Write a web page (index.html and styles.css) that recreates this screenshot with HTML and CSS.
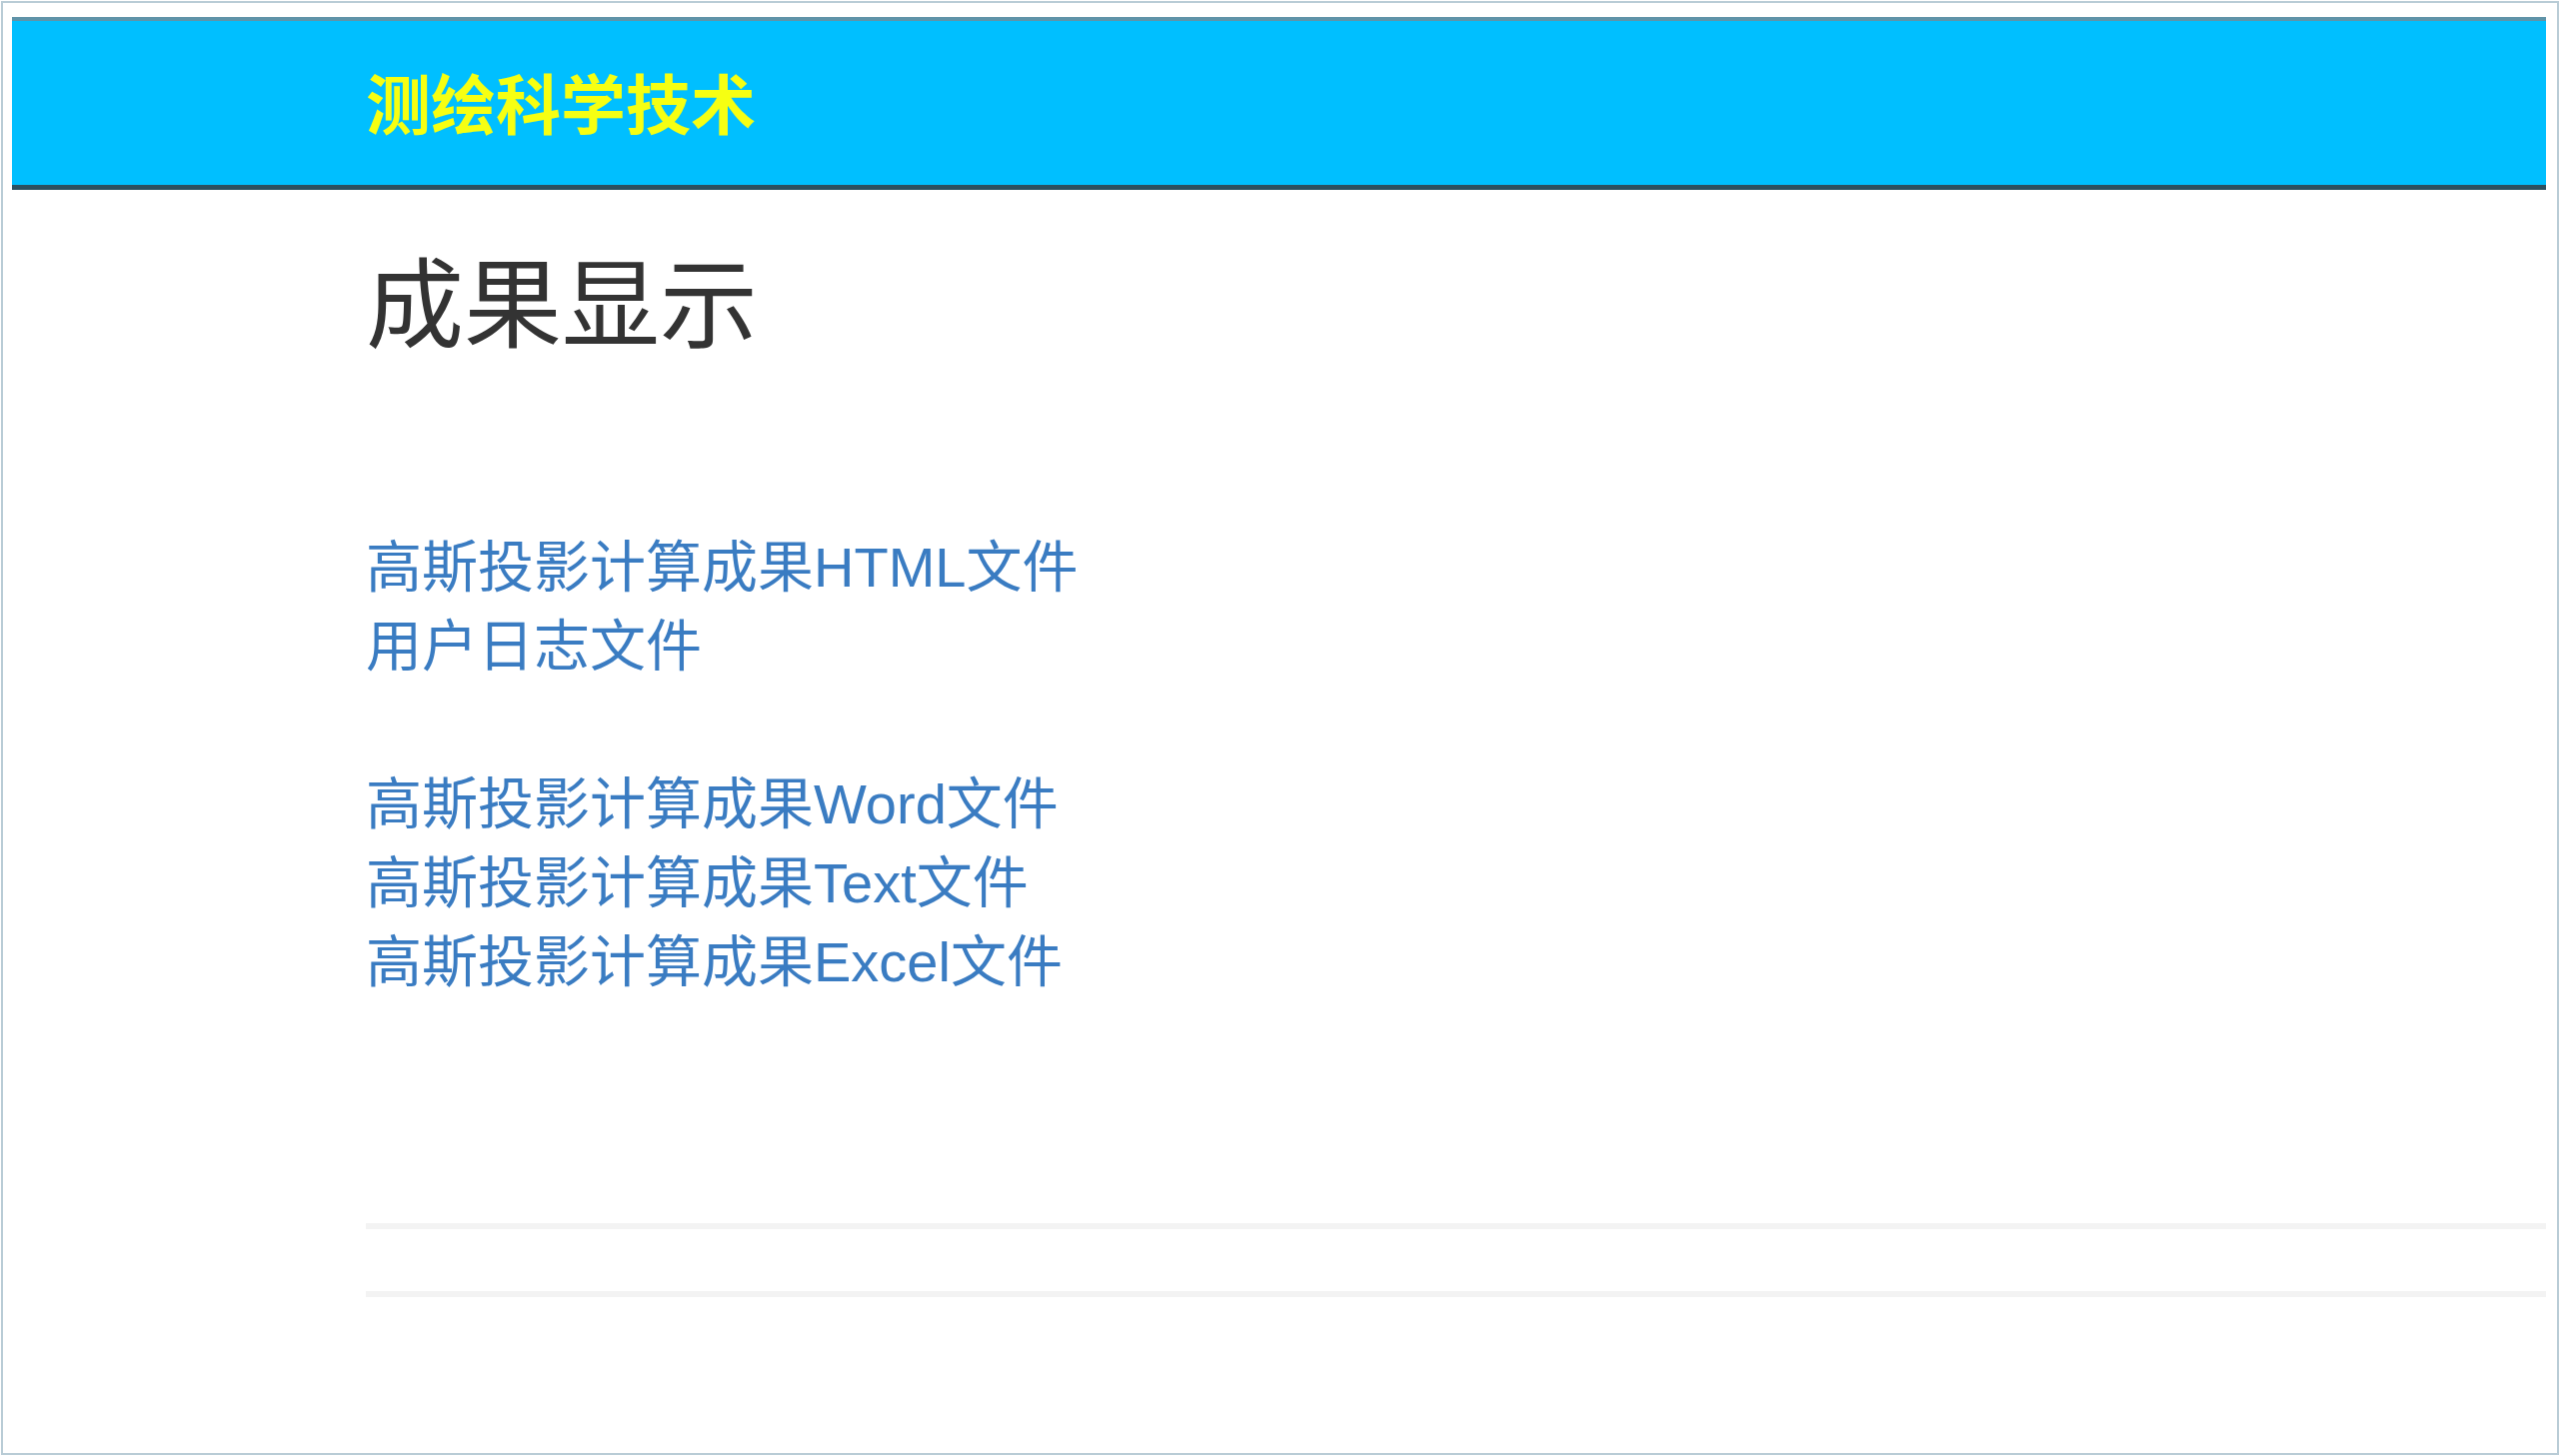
FILE: index.html
```html
<!DOCTYPE html>
<html lang="zh-CN">
<head>
<meta charset="utf-8">
<title>成果显示</title>
<link rel="stylesheet" href="styles.css">
</head>
<body>
<div class="frame">
  <header class="topbar">
    <div class="brand">测绘科学技术</div>
  </header>
  <main class="content">
    <h2 class="page-title">成果显示</h2>
    <div class="links">
      <div class="group">
        <a href="#">高斯投影计算成果HTML文件</a>
        <a href="#">用户日志文件</a>
      </div>
      <div class="group">
        <a href="#">高斯投影计算成果Word文件</a>
        <a href="#">高斯投影计算成果Text文件</a>
        <a href="#">高斯投影计算成果Excel文件</a>
      </div>
    </div>
    <div class="rule rule-first"></div>
    <div class="rule rule-second"></div>
  </main>
</div>
</body>
</html>
```

FILE: styles.css
```css
html, body {
  margin: 0;
  padding: 0;
  background: #ffffff;
}

body {
  font-family: "Liberation Sans", "Noto Sans CJK SC", sans-serif;
}

.frame {
  margin: 1px;
  border: 2px solid #b9ccd6;
  height: calc(100vh - 2px);
  box-sizing: border-box;
  padding: 14px 11px 0 9px;
  overflow: hidden;
}

.topbar {
  height: 173px;
  box-sizing: border-box;
  background: #00bfff;
  border-top: 4px solid #5f93a8;
  border-bottom: 5px solid #2c5060;
  display: flex;
  align-items: center;
  padding: 6px 0 0 354px;
}

.brand {
  font-family: "Liberation Sans", "Noto Sans CJK SC", sans-serif;
  font-size: 65px;
  line-height: 1;
  font-weight: bold;
  color: #f6ff12;
}

.content {
  margin-left: 354px;
}

.page-title {
  margin: 67px 0 0 0;
  font-size: 98px;
  line-height: 1;
  font-weight: normal;
  color: #333333;
}

.links {
  margin-top: 173px;
  display: flex;
  flex-direction: column;
  gap: 79px;
}

.group {
  display: flex;
  flex-direction: column;
}

.group a {
  font-size: 56px;
  line-height: 79px;
  color: #3a7cc2;
  text-decoration: none;
}

.rule {
  height: 6px;
  background: #f3f3f3;
}

.rule-first {
  margin-top: 222px;
}

.rule-second {
  margin-top: 62px;
}
```
